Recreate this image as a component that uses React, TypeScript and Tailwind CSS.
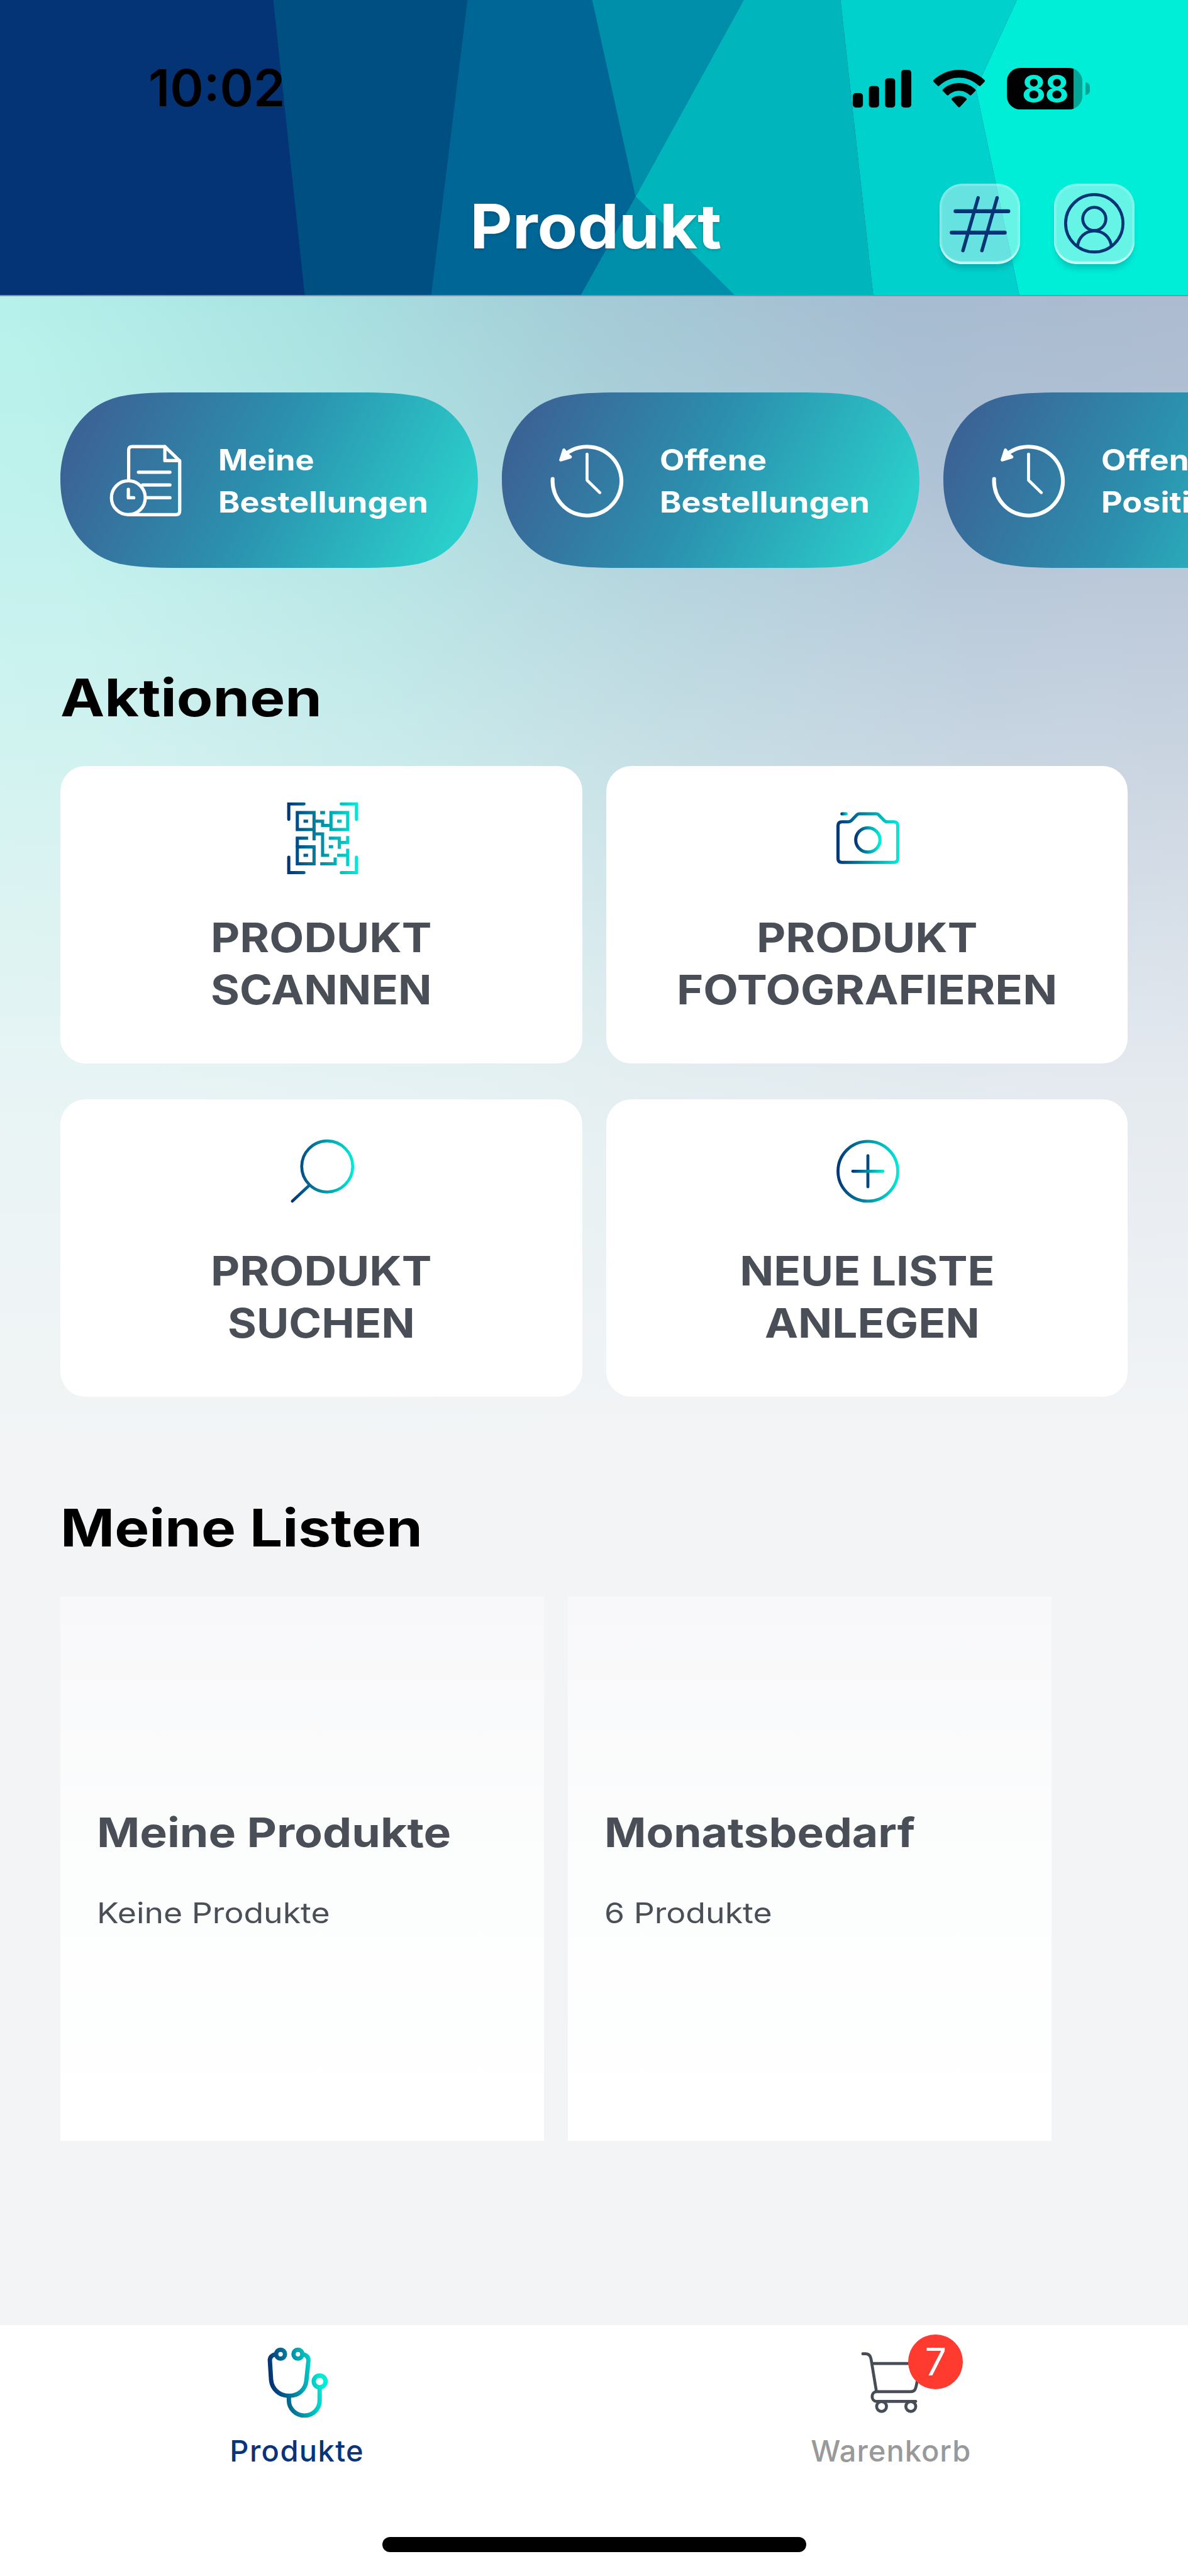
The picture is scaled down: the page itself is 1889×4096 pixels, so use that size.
import React from 'react';

type IconProps = { className?: string };

const BrandGradient: React.FC<{ id: string; x1: number; x2: number; y1?: number; y2?: number }> = ({ id, x1, x2, y1 = 0, y2 = 0 }) => (
  <defs>
    <linearGradient id={id} gradientUnits="userSpaceOnUse" x1={x1} y1={y1} x2={x2} y2={y2}>
      <stop offset="0" stopColor="#043475" />
      <stop offset="1" stopColor="#00edd8" />
    </linearGradient>
  </defs>
);

const HeaderBackdrop = () => (
  <svg className="absolute inset-0 h-full w-full" viewBox="0 0 2000 498" preserveAspectRatio="none">
    <rect width="2000" height="498" fill="#043475" />
    <path d="M460 0H800L740 498H513Z" fill="#004f82" />
    <path d="M787 0H1000L1072 332L982 498H726Z" fill="#006696" />
    <path d="M997 0H1252L1070 332L1236 498H978L1070 332Z" fill="#008fab" />
    <path d="M1252 0H1415L1470 498H1236L1070 332Z" fill="#00b5bb" />
    <path d="M1415 0H1712L1643 150L1716 498H1470Z" fill="#00d1cc" />
    <path d="M1712 0H2000V498H1716L1643 150Z" fill="#00edd8" />
  </svg>
);

const SignalIcon = () => (
  <svg className="h-[60px] w-[93px]" viewBox="0 0 98 63">
    <rect x="0" y="39" width="17" height="24" rx="5" />
    <rect x="27" y="27" width="17" height="36" rx="5" />
    <rect x="54" y="14" width="17" height="49" rx="5" />
    <rect x="81" y="0" width="17" height="63" rx="5" />
  </svg>
);

const WifiIcon = () => (
  <svg className="h-[60px] w-[82px]" viewBox="0 0 86 63">
    <path d="M43 0C60 0 75 7 85.500 17C86.500 18 86.500 19 85.500 20L79 26.500C78 27.500 77 27.500 76 26.500C67 18 56 13 43 13S19 18 10 26.500C9 27.500 8 27.500 7 26.500L.5 20C-.5 19 -.5 18 .5 17C11 7 26 0 43 0Z" />
    <path d="M43 22C54 22 63 26 70 32.500C71 33.500 71 34.500 70 35.500L63.500 42C62.500 43 61.500 43 60.500 42C56 38 50 35 43 35S30 38 25.500 42C24.500 43 23.500 43 22.500 42L16 35.500C15 34.500 15 33.500 16 32.500C23 26 32 22 43 22Z" />
    <path d="M43 43.500C48 43.500 52 45 55 47.500C56 48.500 56 49.500 55 50.500L44.500 62C43.500 63 42.500 63 41.500 62L31 50.500C30 49.500 30 48.500 31 47.500C34 45 38 43.500 43 43.500Z" />
  </svg>
);

const Battery = () => (
  <div className="flex items-center gap-[5px]">
    <div className="flex h-[66px] w-[120px] items-center rounded-[21px] bg-[linear-gradient(to_right,#000_106px,#00a796_106px)] pl-[24px]">
      <span className="text-[58px] leading-[66px] font-bold tracking-[-1px] text-[#00edd8]">88</span>
    </div>
    <div className="h-[20px] w-[7px] rounded-r-full bg-[#00a796]" />
  </div>
);

const HashIcon = () => (
  <svg className="h-full w-full" viewBox="97 87 403 403" fill="none" stroke="#043475" strokeLinecap="round">
    <path d="M177 225H441M158 332H423" strokeWidth="20" />
    <path d="M290 158L214 422M385 158L309 422" strokeWidth="17" />
  </svg>
);

const ProfileIcon = () => (
  <svg className="h-full w-full" viewBox="676 87 404 404" fill="none" stroke="#043475" strokeWidth="15">
    <circle cx="878" cy="286" r="144" />
    <circle cx="878" cy="264" r="58" />
    <path d="M794 404C797 356 834 324 878 324S960 356 964 404" />
  </svg>
);

const HeaderButton: React.FC<{ children: React.ReactNode }> = ({ children }) => (
  <button className="h-[128px] w-[128px] rounded-[36px] bg-white/40 shadow-[inset_0_-4px_2px_rgba(255,255,255,0.6),inset_0_0_0_4px_rgba(255,255,255,0.15),0_10px_10px_-3px_rgba(0,60,80,0.22)]">
    {children}
  </button>
);

const OrdersIcon = ({ className }: IconProps) => (
  <svg className={className} viewBox="-3 0 125 122" fill="none" stroke="white" strokeWidth="5.500" strokeLinecap="round" strokeLinejoin="round">
    <path d="M31.500 61V10Q31.500 4 37.500 4H92.500L117.500 28V112Q117.500 118.500 111 118.500H31" />
    <path d="M92.500 4V27.500H117" />
    <path d="M48 47H101M55 68.500H101M61 90H101" />
    <circle cx="31" cy="90" r="28.500" />
    <path d="M31 76V90H40" />
  </svg>
);

const HistoryIcon = ({ className }: IconProps) => (
  <svg className={className} viewBox="0 0 125 125" fill="none" stroke="white" strokeWidth="6.500" strokeLinecap="round" strokeLinejoin="round">
    <path d="M5 60A58 58 0 1 0 27 18" />
    <path d="M63 18V62L84.500 83" strokeWidth="5" />
    <path d="M24 11L18.500 28L35 23L30 19Z" fill="white" strokeWidth="5" />
  </svg>
);

const ScanIcon = ({ className }: IconProps) => (
  <svg className={className} viewBox="130 96 360 360" fill="none" stroke="url(#scan)" strokeWidth="16">
    <BrandGradient id="scan" x1={133} x2={488} />
    <path d="M140 180V103H216M404 103H480V180M140 371V448H216M404 448H480V371" strokeLinecap="round" />
    <path d="M183 147H267V232H183ZM352 147H436V232H352ZM183 319H267V404H183Z" />
    <path d="M214 190H237M383 190H406M214 361H237M298 147H322M341 318H363" />
    <path d="M275 190H310V211H345M267 232V286M267 254H310V361H343M237 275H183V319" />
    <path d="M341 275H394V329M394 297H436V264M383 361H436M436 328V415M298 404H373V372" />
  </svg>
);

const CameraIcon = ({ className }: IconProps) => (
  <svg className={className} viewBox="123 96 360 360" fill="none" strokeWidth="16" strokeLinejoin="round">
    <BrandGradient id="camera" x1={145} x2={461} />
    <BrandGradient id="lens" x1={240} x2={362} />
    <BrandGradient id="flash" x1={168} x2={200} />
    <path d="M173 193H205Q214 193 220 187L246 160Q252 153 260 153H345Q353 153 359 160L385 187Q391 193 400 193H433Q453 193 453 213V377Q453 397 433 397H173Q153 397 153 377V213Q153 193 173 193Z" stroke="url(#camera)" />
    <circle cx="303" cy="284" r="61" stroke="url(#lens)" />
    <rect x="165" y="145" width="37" height="16" rx="8" fill="url(#flash)" />
  </svg>
);

const SearchIcon = ({ className }: IconProps) => (
  <svg className={className} viewBox="130 72 360 360" fill="none" stroke="url(#search)" strokeWidth="15" strokeLinecap="round">
    <BrandGradient id="search" x1={157} x2={467} />
    <circle cx="333" cy="226" r="128" />
    <path d="M244 320L158 400" />
  </svg>
);

const PlusIcon = ({ className }: IconProps) => (
  <svg className={className} viewBox="0 0 360 360" fill="none" strokeWidth="15" strokeLinecap="round">
    <BrandGradient id="ring" x1={22} x2={338} />
    <BrandGradient id="bar" x1={98} x2={262} />
    <circle cx="180" cy="178" r="150" stroke="url(#ring)" />
    <path d="M180 100V256" stroke="#034b80" />
    <path d="M104 178.010L256 178" stroke="url(#bar)" />
  </svg>
);

const StethoscopeIcon = ({ className }: IconProps) => (
  <svg className={className} viewBox="240 151 360 360" fill="none" stroke="url(#stetho)" strokeWidth="22">
    <BrandGradient id="stetho" x1={290} y1={330} x2={540} y2={290} />
    <circle cx="336" cy="187" r="22.500" />
    <circle cx="424" cy="187" r="22.500" />
    <circle cx="534" cy="325" r="30" />
    <path d="M314 187C292 190 280 202 282 222L288 318C293 366 332 398 379 398C427 398 463 366 467 318L477 222C479 202 468 190 446 187" />
    <path d="M378 398V420C378 465 415 498 457 498C500 498 534 465 534 420V355" />
  </svg>
);

const CartIcon = ({ className }: IconProps) => (
  <svg className={className} viewBox="300 150 360 360" fill="none" stroke="#464d56" strokeWidth="15" strokeLinecap="round" strokeLinejoin="round">
    <path d="M338 184H353C370 184 377 194 380 212L407 375" />
    <path d="M384 233H630L611 335C606 362 602 376 580 376H407C378 378 378 423 407 425H606" />
    <circle cx="433" cy="451" r="25" />
    <circle cx="581" cy="451" r="25" />
  </svg>
);

// stretch widens the face a little, line by line
const SHORTCUTS = [
  { lines: [{ text: 'Meine', stretch: 'scale-x-[1.1]' }, { text: 'Bestellungen', stretch: 'scale-x-[1.133]' }], Icon: OrdersIcon },
  { lines: [{ text: 'Offene', stretch: 'scale-x-[1.115]' }, { text: 'Bestellungen', stretch: 'scale-x-[1.133]' }], Icon: HistoryIcon },
  { lines: [{ text: 'Offene', stretch: 'scale-x-[1.115]' }, { text: 'Positionen', stretch: 'scale-x-[1.133]' }], Icon: HistoryIcon },
];

const ACTIONS = [
  { lines: [{ text: 'PRODUKT', stretch: 'scale-x-[1.1]' }, { text: 'SCANNEN', stretch: 'scale-x-[1.08]' }], Icon: ScanIcon },
  { lines: [{ text: 'PRODUKT', stretch: 'scale-x-[1.1]' }, { text: 'FOTOGRAFIEREN', stretch: 'scale-x-[1.11]' }], Icon: CameraIcon },
  { lines: [{ text: 'PRODUKT', stretch: 'scale-x-[1.1]' }, { text: 'SUCHEN', stretch: 'scale-x-[1.08]' }], Icon: SearchIcon },
  { lines: [{ text: 'NEUE LISTE', stretch: 'scale-x-[1.09]' }, { text: 'ANLEGEN', stretch: 'pl-[15px] scale-x-[1.095]' }], Icon: PlusIcon },
];

const LISTS = [
  { title: 'Meine Produkte', titleStretch: 'scale-x-[1.128]', count: 'Keine Produkte' },
  { title: 'Monatsbedarf', titleStretch: 'scale-x-[1.097]', count: '6 Produkte' },
];

const App: React.FC = () => {
  return (
    <div className="flex h-[4096px] w-[1889px] flex-col overflow-hidden bg-[#f2f4f6] font-['Inter',sans-serif]">
      <header className="relative h-[471px] shrink-0 border-b-2 border-[#7795a2]">
        <HeaderBackdrop />
        <div className="relative flex h-[281px] items-center justify-between pr-[156px] pl-[236px]">
          <span className="text-[81px] leading-none font-semibold text-black">10:02</span>
          <div className="flex items-center gap-[35px]">
            <SignalIcon />
            <WifiIcon />
            <Battery />
          </div>
        </div>
        <div className="relative grid h-[149px] grid-cols-[1fr_auto_1fr] items-center">
          <h1 className="col-start-2 pt-2 pl-[5px] text-[98px] leading-none font-bold text-white [text-shadow:0_2px_5px_rgba(0,0,0,0.2)]">
            <span className="inline-block scale-x-[1.062]">Produkt</span>
          </h1>
          <div className="mr-[85px] flex gap-[54px] justify-self-end">
            <HeaderButton><HashIcon /></HeaderButton>
            <HeaderButton><ProfileIcon /></HeaderButton>
          </div>
        </div>
      </header>

      <main className="flex-1 bg-[linear-gradient(to_bottom,rgba(242,244,246,0)_0px,rgba(242,244,246,0.12)_300px,rgba(242,244,246,0.46)_750px,rgba(242,244,246,0.82)_1250px,#f2f4f6_1800px),linear-gradient(78deg,#b9f4ee_0%,#b7f1eb_27%,#a9e3e2_45%,#a4ccd7_63%,#a6bcd1_82%,#adbbd0_100%)] px-[96px] pt-[153px]">
        <div className="flex w-max gap-[38px]">
          {SHORTCUTS.map(({ lines, Icon }, i) => (
            <button key={i} className="flex h-[279px] w-[664px] items-center bg-[linear-gradient(116deg,#3b6496_8%,#2b90ae_48%,#2acfcb_92%)] pl-[76px] text-left [clip-path:path('M0_139.5C0_70_40_16_100_5.5C130_0_165_0_200_0H464C499_0_534_0_564_5.5C624_16_664_70_664_139.5C664_209_624_263_564_273.5C534_279_499_279_464_279H200C165_279_130_279_100_273.5C40_263_0_209_0_139.5Z')]">
              <Icon className="h-[118px] w-[118px] shrink-0" />
              <span className="ml-[57px] flex flex-col items-start pt-[2px] text-[46px] leading-[67px] font-bold text-white">
                {lines.map(({ text, stretch }) => <span key={text} className={`origin-left ${stretch}`}>{text}</span>)}
              </span>
            </button>
          ))}
        </div>

        <h2 className="mt-[157px] w-max origin-left scale-x-[1.148] text-[82px] leading-[100px] font-bold text-black">Aktionen</h2>
        <div className="mt-[58px] grid grid-cols-[830px_829px] gap-x-[38px] gap-y-[57px]">
          {ACTIONS.map(({ lines, Icon }, i) => (
            <button key={i} className="flex h-[473px] flex-col items-center rounded-[40px] bg-white pt-[58px] text-[#4a4f57]">
              <Icon className="ml-[3px] h-[114px] w-[114px]" />
              <span className="mt-[59px] flex flex-col items-center text-[65px] leading-[83px] font-bold">
                {lines.map(({ text, stretch }) => <span key={text} className={stretch}>{text}</span>)}
              </span>
            </button>
          ))}
        </div>

        <h2 className="mt-[159px] w-max origin-left scale-x-[1.128] text-[82px] leading-[100px] font-bold text-black">Meine Listen</h2>
        <div className="mt-[59px] flex gap-[38px]">
          {LISTS.map(({ title, titleStretch, count }) => (
            <div key={title} className="flex h-[865px] w-[769px] flex-col items-start bg-linear-to-b from-[#f8f8fa] via-[#fcfdfd] to-white px-[58px] pt-[335px] text-[#4a4f57]">
              <h3 className={`origin-left text-[65px] leading-[80px] font-bold ${titleStretch}`}>{title}</h3>
              <p className="mt-[58px] origin-left scale-x-[1.15] text-[45px] leading-[60px]">{count}</p>
            </div>
          ))}
        </div>
      </main>

      <nav className="flex h-[399px] shrink-0 flex-col bg-white">
        <div className="grid grid-cols-2">
          <button className="flex flex-col items-center pt-[35px] text-[#0a347a]">
            <StethoscopeIcon className="h-[113px] w-[113px]" />
            <span className="mt-[22px] text-[47px] leading-[60px] font-medium tracking-[1.4px]">Produkte</span>
          </button>
          <button className="flex flex-col items-center pt-[35px] text-[#999999]">
            <span className="relative">
              <CartIcon className="h-[113px] w-[113px]" />
              <span className="absolute -top-5 left-[84px] flex h-[87px] w-[87px] items-center justify-center rounded-full bg-[#ff3b30] text-[61px] leading-none font-normal text-white">7</span>
            </span>
            <span className="mt-[22px] text-[47px] leading-[60px] font-medium tracking-[1px]">Warenkorb</span>
          </button>
        </div>
        <div className="mx-auto mt-auto mb-[38px] h-[24px] w-[674px] rounded-full bg-black" />
      </nav>
    </div>
  );
};

export default App;
